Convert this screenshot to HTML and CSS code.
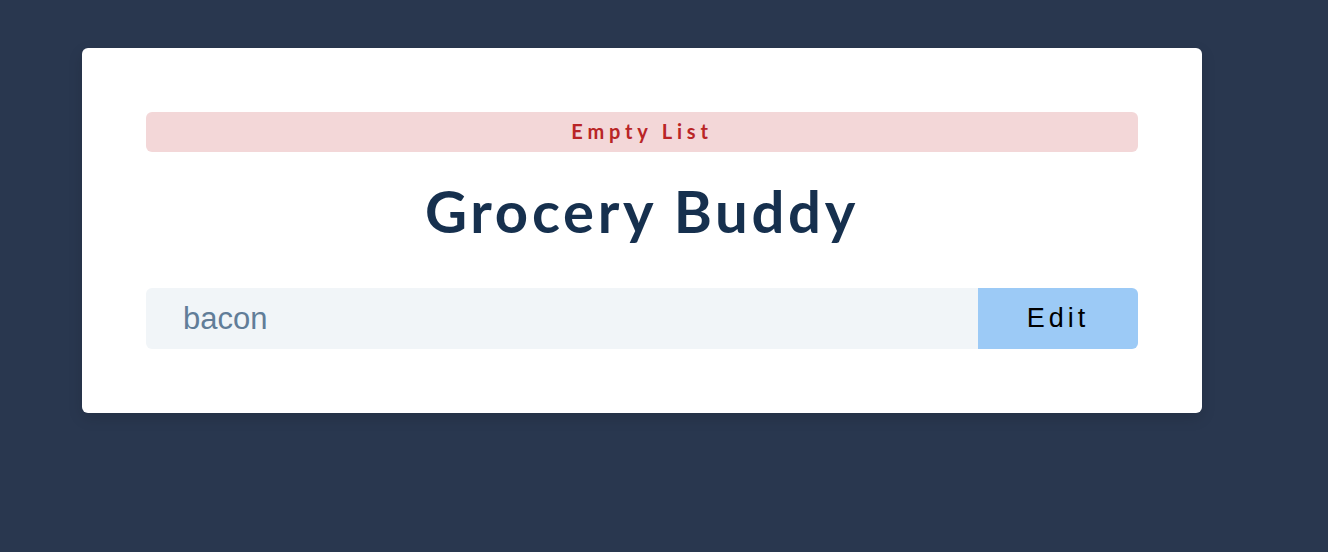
FILE: index.html
```html
<!DOCTYPE html>
<html lang="en">
<head>
<meta charset="utf-8">
<title>Grocery Buddy</title>
<link rel="stylesheet" href="styles.css">
</head>
<body>
<section class="card">
  <p class="alert">Empty List</p>
  <h3 class="title">Grocery Buddy</h3>
  <form class="form-control">
    <input class="grocery" type="text" value="bacon">
    <button class="submit-btn" type="button">Edit</button>
  </form>
</section>
</body>
</html>
```

FILE: styles.css
```css
html, body {
  margin: 0;
  padding: 0;
}
body {
  background: #29374f;
  font-family: "Lato", "Open Sans", sans-serif;
  min-height: 552px;
  padding-top: 48px;
  padding-left: 82px;
  box-sizing: border-box;
}
.card {
  width: 1120px;
  box-sizing: border-box;
  background: #ffffff;
  border-radius: 6px;
  padding: 64px;
  box-shadow: 0 5px 15px rgba(0, 0, 0, 0.12);
  display: flex;
  flex-direction: column;
}
.alert {
  margin: 0;
  height: 40px;
  box-sizing: border-box;
  padding-bottom: 3px;
  display: flex;
  align-items: center;
  justify-content: center;
  background: #f3d7d8;
  color: #b92526;
  border-radius: 6px;
  font-size: 20px;
  font-weight: 700;
  letter-spacing: 4.8px;
}
.title {
  margin: 23px 0 41px;
  font-size: 58px;
  line-height: 72px;
  font-weight: 700;
  color: #16304e;
  text-align: center;
  letter-spacing: 3.7px;
}
.form-control {
  display: flex;
  height: 61px;
  margin: 0;
}
.grocery {
  flex: 1 1 auto;
  min-width: 0;
  border: none;
  outline: none;
  background: #f1f5f8;
  border-radius: 6px 0 0 6px;
  padding: 0 0 0 37px;
  font-family: "Liberation Sans", Arial, sans-serif;
  font-size: 31px;
  color: #617d98;
}
.submit-btn {
  flex: 0 0 160px;
  border: none;
  background: #9ccaf6;
  border-radius: 0 6px 6px 0;
  font-family: "Liberation Sans", Arial, sans-serif;
  font-size: 27px;
  letter-spacing: 4px;
  color: #000000;
  padding: 0;
  cursor: pointer;
}
```
